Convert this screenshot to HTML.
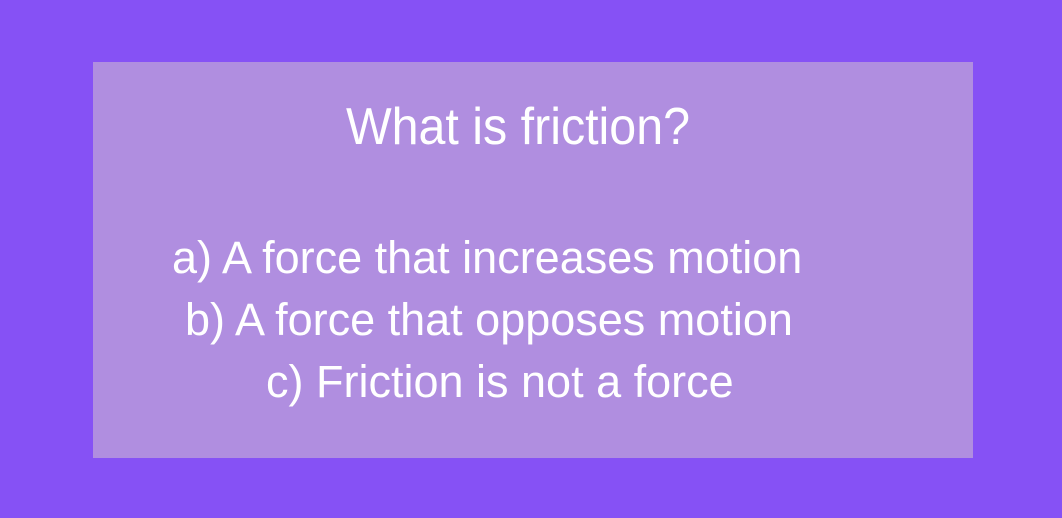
<!DOCTYPE html>
<html><head><style>
html,body{margin:0;padding:0;}
body{width:1062px;height:518px;background:#8651f5;position:relative;overflow:hidden;font-family:"Liberation Sans",sans-serif;color:#fff;}
.box{position:absolute;left:93px;top:62px;width:880px;height:396px;background:#b08ee0;}
.t{position:absolute;white-space:nowrap;font-size:45px;line-height:1;}
</style></head><body>
<div class="box"></div>
<div class="t" style="top:101px;left:-13px;width:1062px;text-align:center;font-size:52px;transform:scaleX(0.93);transform-origin:531px 0;">What is friction?</div>
<div class="t" style="top:235px;left:172px;">a) A force that increases motion</div>
<div class="t" style="top:297px;left:185px;">b) A force that opposes motion</div>
<div class="t" style="top:359px;left:266px;">c) Friction is not a force</div>
</body></html>
